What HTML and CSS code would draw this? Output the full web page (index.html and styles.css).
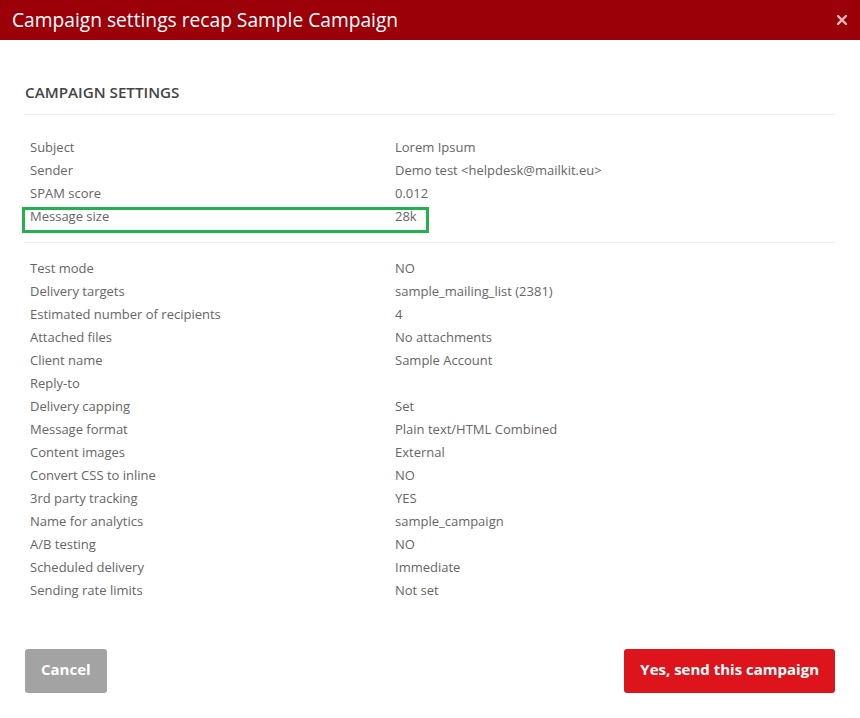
FILE: index.html
```html
<!DOCTYPE html>
<html lang="en">
<head>
  <meta charset="UTF-8">
  <meta name="viewport" content="width=device-width, initial-scale=1.0">
  <title>Campaign settings recap</title>
  <link rel="stylesheet" href="styles.css">
</head>
<body>
  <div class="modal">
    <div class="modal-header">
      <h1>Campaign settings recap Sample Campaign</h1>
      <button class="close" aria-label="Close">
        <svg width="10" height="10" viewBox="0 0 10 10"><path d="M1 1L9 9M9 1L1 9" stroke="currentColor" stroke-width="2.4" stroke-linecap="square"/></svg>
      </button>
    </div>

    <div class="modal-body">
      <h2>Campaign settings</h2>

      <div class="section first">
        <div class="row"><span>Subject</span><span>Lorem Ipsum</span></div>
        <div class="row"><span>Sender</span><span>Demo test &lt;helpdesk@mailkit.eu&gt;</span></div>
        <div class="row"><span>SPAM score</span><span>0.012</span></div>
        <div class="row marked"><span>Message size</span><span>28k</span></div>
      </div>

      <div class="section">
        <div class="row"><span>Test mode</span><span>NO</span></div>
        <div class="row"><span>Delivery targets</span><span>sample_mailing_list (2381)</span></div>
        <div class="row"><span>Estimated number of recipients</span><span>4</span></div>
        <div class="row"><span>Attached files</span><span>No attachments</span></div>
        <div class="row"><span>Client name</span><span>Sample Account</span></div>
        <div class="row"><span>Reply-to</span><span></span></div>
        <div class="row"><span>Delivery capping</span><span>Set</span></div>
        <div class="row"><span>Message format</span><span>Plain text/HTML Combined</span></div>
        <div class="row"><span>Content images</span><span>External</span></div>
        <div class="row"><span>Convert CSS to inline</span><span>NO</span></div>
        <div class="row"><span>3rd party tracking</span><span>YES</span></div>
        <div class="row"><span>Name for analytics</span><span>sample_campaign</span></div>
        <div class="row"><span>A/B testing</span><span>NO</span></div>
        <div class="row"><span>Scheduled delivery</span><span>Immediate</span></div>
        <div class="row"><span>Sending rate limits</span><span>Not set</span></div>
      </div>
    </div>

    <div class="modal-footer">
      <button class="btn btn-cancel">Cancel</button>
      <button class="btn btn-send">Yes, send this campaign</button>
    </div>
  </div>
</body>
</html>
```

FILE: styles.css
```css
*, *::before, *::after { box-sizing: border-box; }
body {
  margin: 0;
  font-family: "Open Sans", Arial, sans-serif;
  background: #fff;
  color: #666;
}
.modal { width: 860px; }
.modal-header {
  height: 40px;
  background: #9b0009;
  display: flex; align-items: center; justify-content: space-between;
  padding: 0 12px;
}
.modal-header h1 {
  margin: 0;
  font-size: 19.2px;
  font-weight: 400;
  color: #fff;
  line-height: 40px;
}
.close {
  background: none; border: none; padding: 0;
  color: rgba(255,255,255,0.72);
  display: flex; cursor: pointer;
  margin-right: 1px;
}
.modal-body { padding: 0 25px; }
.modal-body h2 {
  margin: 42px 0 0;
  height: 33px;
  padding-bottom: 12px;
  border-bottom: 1px solid #ededed;
  font-size: 15.2px;
  font-weight: 600;
  line-height: 20px;
  text-transform: uppercase;
  color: #444;
}
.section { padding-top: 14px; }
.section.first {
  padding: 21px 0 14px;
  border-bottom: 1px solid #ededed;
}
.row {
  display: grid;
  grid-template-columns: 365px 1fr;
  height: 23px;
  padding-left: 5px;
  font-size: 13px;
  line-height: 23px;
  color: #666;
}
.row.marked { position: relative; }
.row.marked::after {
  content: "";
  position: absolute;
  left: -3px; top: 2px;
  width: 407px; height: 26px;
  border: 3px solid #22b14c;
  pointer-events: none;
}
.modal-footer {
  display: flex; justify-content: space-between;
  padding: 47px 25px 0;
}
.btn {
  height: 44px;
  border: none;
  border-radius: 3px;
  padding: 0 16px 4px;
  font-family: "Open Sans", Arial, sans-serif;
  font-size: 15px;
  font-weight: 700;
  color: #fff;
  cursor: pointer;
}
.btn-cancel { background: #a3a3a3; }
.btn-send { background: #dd141c; }
```
